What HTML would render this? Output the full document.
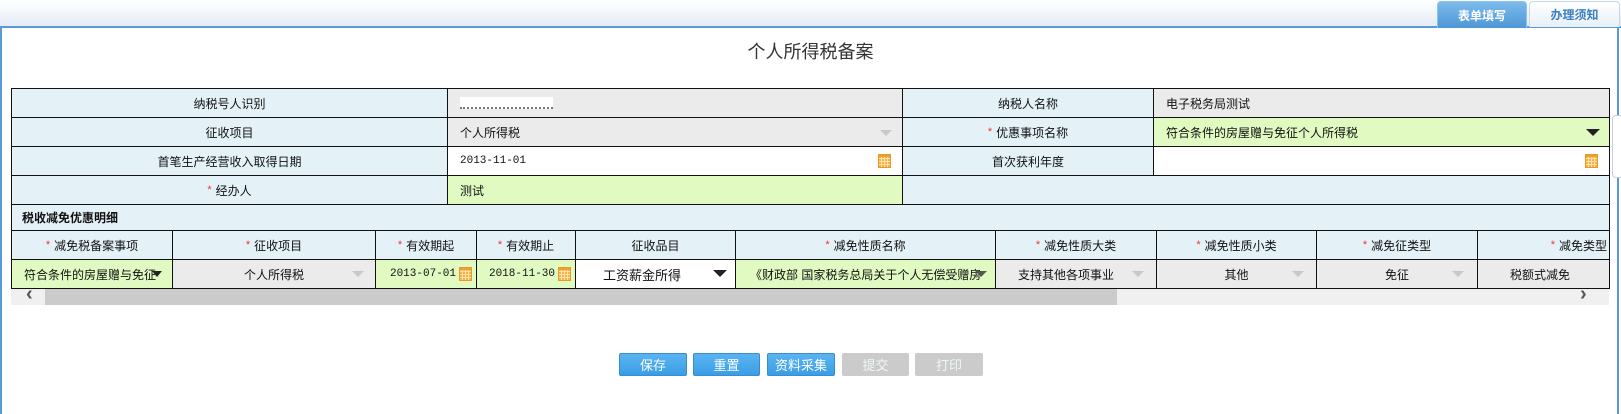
<!DOCTYPE html>
<html><head><meta charset="utf-8">
<style>
*{margin:0;padding:0;box-sizing:border-box}
body{width:1621px;height:414px;overflow:hidden;background:#fff;position:relative;font-family:"Liberation Sans","Noto Sans CJK SC","WenQuanYi Zen Hei",sans-serif;font-size:12px;color:#111}
.a{position:absolute}
.c{position:absolute;border:1px solid #111;display:flex;align-items:center;white-space:nowrap;overflow:hidden}
.l{background:#e4f2f8;justify-content:center}
.g{background:#ebebeb}
.gr{background:#e0fac2}
.w{background:#fff}
.p{padding-left:12px}
.ctr{justify-content:center}
.r{justify-content:flex-end;padding-right:20px}
.m{font-family:"Liberation Mono",monospace;font-size:11px}
.s{color:#e33;margin-right:4px;font-size:11px}
.ag{position:absolute;width:0;height:0;border-left:6px solid transparent;border-right:6px solid transparent;border-top:6px solid #c8c8c8}
.ab{position:absolute;width:0;height:0;border-left:7px solid transparent;border-right:7px solid transparent;border-top:7px solid #222}
.cal{position:absolute;width:13px;height:14px;background:#f8b246;border:1px solid #e89a22;
background-image:linear-gradient(#f0a030 0 2px,transparent 2px),repeating-linear-gradient(90deg,transparent 0 2px,#fde2b0 2px 3px),repeating-linear-gradient(0deg,transparent 0 2px,#fde2b0 2px 3px)}
.btn{position:absolute;top:353px;height:23px;color:#fff;font-size:13px;display:flex;align-items:center;justify-content:center;border-radius:2px}
.bb{background:linear-gradient(#5ab4f0,#3a9ee6);border:1px solid #3a8bd0}
.bd{background:#cbcbcb;color:#eef8f8}
</style></head><body>
<div class="a" style="left:0;top:0;width:1621px;height:26px;background:linear-gradient(#fff,#e4ecf6)"></div>
<div class="a" style="left:0;top:26px;width:1621px;height:2px;background:#5b9bd5"></div>
<div class="a" style="left:0;top:26px;width:2px;height:388px;background:#5b9bd5"></div>
<div class="a" style="left:1617px;top:26px;width:2px;height:388px;background:#5b9bd5"></div>
<div class="a" style="left:1437px;top:1px;width:90px;height:27px;background:linear-gradient(#7cbcec,#4e96d6);border:1px solid #8fc3ea;border-bottom:none;border-radius:4px 4px 0 0;color:#fff;font-weight:bold;font-size:12px;display:flex;align-items:center;justify-content:center">表单填写</div>
<div class="a" style="left:1529px;top:1px;width:91px;height:26px;background:linear-gradient(#fff,#e8f0f8);border:1px solid #c8d8ea;border-bottom:none;border-radius:4px 4px 0 0;color:#3a7fc2;font-weight:bold;font-size:12px;display:flex;align-items:center;justify-content:center">办理须知</div>
<div class="a" style="left:0;top:38px;width:1621px;text-align:center;font-size:18px;color:#333">个人所得税备案</div>

<div class="c l" style="left:11px;top:88px;width:437px;height:30px">纳税号人识别</div>
<div class="c g p" style="left:447px;top:88px;width:456px;height:30px"><span style="display:inline-block;width:93px;height:12px;background:#fff;border-bottom:2px dotted #777"></span></div>
<div class="c l" style="left:902px;top:88px;width:252px;height:30px">纳税人名称</div>
<div class="c g p" style="left:1153px;top:88px;width:457px;height:30px">电子税务局测试</div>

<div class="c l" style="left:11px;top:117px;width:437px;height:30px">征收项目</div>
<div class="c g p" style="left:447px;top:117px;width:456px;height:30px">个人所得税</div>
<div class="ag" style="left:880px;top:130px"></div>
<div class="c l" style="left:902px;top:117px;width:252px;height:30px"><span class="s">*</span>优惠事项名称</div>
<div class="c gr p" style="left:1153px;top:117px;width:457px;height:30px">符合条件的房屋赠与免征个人所得税</div>
<div class="ab" style="left:1586px;top:129px"></div>

<div class="c l" style="left:11px;top:146px;width:437px;height:30px">首笔生产经营收入取得日期</div>
<div class="c w p m" style="left:447px;top:146px;width:456px;height:30px">2013-11-01</div>
<div class="cal" style="left:878px;top:154px"></div>
<div class="c l" style="left:902px;top:146px;width:252px;height:30px">首次获利年度</div>
<div class="c w" style="left:1153px;top:146px;width:457px;height:30px"></div>
<div class="cal" style="left:1585px;top:154px"></div>

<div class="c l" style="left:11px;top:175px;width:437px;height:30px"><span class="s">*</span>经办人</div>
<div class="c gr p" style="left:447px;top:175px;width:456px;height:30px">测试</div>
<div class="c l" style="left:902px;top:175px;width:708px;height:30px"></div>

<div class="c" style="left:11px;top:204px;width:1599px;height:27px;background:#e4f2f8;padding-left:10px;font-weight:bold">税收减免优惠明细</div>

<div class="c l" style="left:11px;top:230px;width:162px;height:30px"><span class="s">*</span>减免税备案事项</div>
<div class="c l" style="left:172px;top:230px;width:204px;height:30px"><span class="s">*</span>征收项目</div>
<div class="c l" style="left:375px;top:230px;width:102px;height:30px"><span class="s">*</span>有效期起</div>
<div class="c l" style="left:476px;top:230px;width:100px;height:30px"><span class="s">*</span>有效期止</div>
<div class="c l" style="left:575px;top:230px;width:161px;height:30px">征收品目</div>
<div class="c l" style="left:735px;top:230px;width:261px;height:30px"><span class="s">*</span>减免性质名称</div>
<div class="c l" style="left:995px;top:230px;width:162px;height:30px"><span class="s">*</span>减免性质大类</div>
<div class="c l" style="left:1156px;top:230px;width:161px;height:30px"><span class="s">*</span>减免性质小类</div>
<div class="c l" style="left:1316px;top:230px;width:162px;height:30px"><span class="s">*</span>减免征类型</div>
<div class="c l" style="left:1477px;top:230px;width:133px;height:30px;justify-content:flex-end;padding-right:2px"><span class="s">*</span>减免类型</div>

<div class="c gr" style="left:11px;top:259px;width:162px;height:30px;padding-left:12px">符合条件的房屋赠与免征</div>
<div class="ab" style="left:152px;top:271px;border-width:6px 5px 0 5px"></div>
<div class="c g ctr" style="left:172px;top:259px;width:204px;height:30px">个人所得税</div>
<div class="ag" style="left:352px;top:271px"></div>
<div class="c gr r m" style="left:375px;top:259px;width:102px;height:30px">2013-07-01</div>
<div class="cal" style="left:459px;top:267px"></div>
<div class="c gr r m" style="left:476px;top:259px;width:100px;height:30px">2018-11-30</div>
<div class="cal" style="left:558px;top:267px"></div>
<div class="c w" style="left:575px;top:259px;width:161px;height:30px;padding-left:27px;font-size:13px">工资薪金所得</div>
<div class="ab" style="left:713px;top:270px"></div>
<div class="c gr" style="left:735px;top:259px;width:261px;height:30px;padding-left:14px">《财政部 国家税务总局关于个人无偿受赠房</div>
<div class="ag" style="left:975px;top:271px;border-top-color:#555"></div>
<div class="c g" style="left:995px;top:259px;width:162px;height:30px;padding-left:22px">支持其他各项事业</div>
<div class="ag" style="left:1132px;top:271px"></div>
<div class="c g ctr" style="left:1156px;top:259px;width:161px;height:30px">其他</div>
<div class="ag" style="left:1292px;top:271px"></div>
<div class="c g ctr" style="left:1316px;top:259px;width:162px;height:30px">免征</div>
<div class="ag" style="left:1452px;top:271px"></div>
<div class="c g" style="left:1477px;top:259px;width:133px;height:30px;padding-left:32px">税额式减免</div>

<div class="a" style="left:11px;top:289px;width:1598px;height:16px;background:#f0f0f0"></div>
<div class="a" style="left:45px;top:289px;width:1072px;height:16px;background:#cbcbcb"></div>
<div class="a" style="left:26px;top:284px;font-size:20px;font-weight:bold;color:#555;line-height:20px">&#8249;</div>
<div class="a" style="left:1580px;top:284px;font-size:20px;font-weight:bold;color:#555;line-height:20px">&#8250;</div>

<div class="a" style="left:1612px;top:115px;width:12px;height:63px;border:1px solid #ccd;border-radius:4px;background:#fff"></div>

<div class="btn bb" style="left:619px;width:68px">保存</div>
<div class="btn bb" style="left:693px;width:67px">重置</div>
<div class="btn bb" style="left:767px;width:68px">资料采集</div>
<div class="btn bd" style="left:842px;width:67px">提交</div>
<div class="btn bd" style="left:915px;width:68px">打印</div>
</body></html>
